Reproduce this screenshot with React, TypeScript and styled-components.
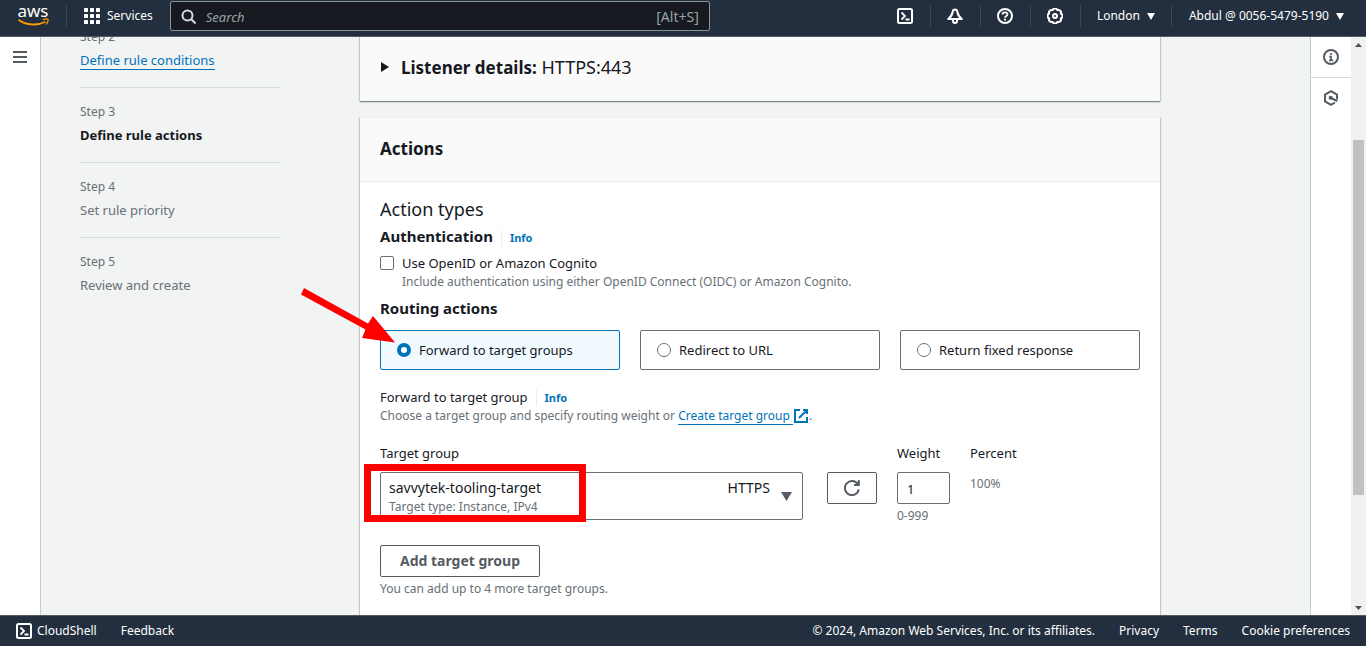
import React, { useState } from "react";
import styled, { createGlobalStyle } from "styled-components";

const GlobalStyle = createGlobalStyle`
  *, *::before, *::after { box-sizing: border-box; }
  body {
    margin: 0;
    font-family: "Noto Sans", sans-serif;
    font-size: 13px;
    line-height: 20px;
    color: #16191f;
    background: #f2f3f3;
  }
  button, input, select { font: inherit; color: inherit; margin: 0; }
  h1, h2, h3, p, ol { margin: 0; padding: 0; }
`;

const Shell = styled.div`
  display: flex;
  flex-direction: column;
  height: 100vh;
  overflow: hidden;
`;

/* ---------- top navigation ---------- */

const TopBar = styled.header`
  display: flex;
  align-items: center;
  flex: none;
  height: 37px;
  padding: 0 0 4px;
  background: #232f3e;
  border-bottom: 1px solid #545b64;
  color: #fff;
  font-size: 12px;
`;

const LogoLink = styled.a`
  display: flex;
  padding: 0 17px;
  color: #fff;
  & > svg { overflow: visible; }
`;

const Rule = styled.span`
  width: 1px;
  height: 22px;
  background: #414750;
`;

const NavButton = styled.button<{ $pad?: number }>`
  display: flex;
  align-items: center;
  gap: 7px;
  padding: 0 ${(p) => p.$pad ?? 16}px;
  border: 0;
  background: none;
  font-size: 12px;
  line-height: 20px;
  white-space: nowrap;
`;

const IconButton = styled.button`
  display: flex;
  align-items: center;
  justify-content: center;
  width: 49px;
  padding: 0;
  border: 0;
  background: none;
`;

const SearchBox = styled.label`
  display: flex;
  align-items: center;
  flex: 0 1 540px;
  height: 30px;
  padding: 1px 10px 0;
  gap: 9px;
  background: #161920;
  border: 1px solid #879596;
  border-radius: 2px;
  color: #95a5a6;
  font-size: 14px;
`;

const SearchInput = styled.input`
  flex: 1;
  min-width: 0;
  padding: 0;
  border: 0;
  outline: 0;
  background: none;
  font-size: 13px;
  &::placeholder { color: #95a5a6; font-style: italic; opacity: 1; }
`;

const NavEnd = styled.div`
  display: flex;
  align-items: center;
  margin-left: auto;
  padding-right: 5px;
`;

/* ---------- page frame ---------- */

const Body = styled.div`
  display: flex;
  flex: 1;
  min-height: 0;
`;

const SideRail = styled.nav`
  flex: none;
  width: 41px;
  padding: 10px 0 0 10px;
  background: #fff;
  border-right: 1px solid #c5cccc;
`;

const RailButton = styled.button`
  display: flex;
  align-items: center;
  justify-content: center;
  width: 20px;
  height: 20px;
  padding: 0;
  border: 0;
  background: none;
  color: #545b64;
`;

const ToolRail = styled.aside`
  flex: none;
  width: 41px;
  background: #fff;
  border-left: 1px solid #c5cccc;
`;

const ToolButton = styled.button`
  display: flex;
  align-items: center;
  justify-content: center;
  width: 40px;
  height: 40px;
  padding: 0;
  border: 0;
  background: none;
  color: #545b64;
  &:first-child { height: 41px; border-bottom: 1px solid #d5dbdb; }
`;

const ScrollTrack = styled.div`
  display: flex;
  flex-direction: column;
  align-items: center;
  flex: none;
  width: 15px;
  padding: 6px 0 5px;
  background: #f1f1f1;
  color: #505050;
`;

const ScrollGutter = styled.div`
  display: flex;
  flex-direction: column;
  flex: 1;
  width: 11px;
  padding: 93px 0 111px;
`;

const ScrollThumb = styled.div`
  flex: 1;
  background: #c1c1c1;
`;

const Content = styled.main`
  display: flex;
  flex: 1;
  gap: 80px;
  min-width: 0;
  padding: 0 40px 0 39px;
  overflow: hidden;
`;

/* ---------- wizard steps ---------- */

const Steps = styled.ol`
  flex: none;
  width: 200px;
  margin-top: -24px;
  list-style: none;
`;

const Step = styled.li`
  padding: 13px 0 15px;
  border-bottom: 1px solid #d5dbdb;
  color: #687078;
  &:last-child { border-bottom: 0; }
`;

const StepLabel = styled.div`
  font-size: 12px;
  line-height: 22px;
`;

const StepTitle = styled.div<{ $current?: boolean }>`
  line-height: 24px;
  ${(p) => p.$current && "color: #16191f; font-weight: 700;"}
`;

const Link = styled.a`
  color: #0073bb;
  text-decoration: none;
  border-bottom: 1px solid #0073bb;
`;

/* ---------- panels ---------- */

const Main = styled.div`
  display: flex;
  flex-direction: column;
  flex: 1;
  gap: 16px;
  min-width: 0;
  max-width: 800px;
`;

const Panel = styled.section`
  background: #fff;
  border-top: 1px solid #eaeded;
  box-shadow: 0 1px 1px 0 rgba(0, 28, 36, 0.3), 1px 1px 1px 0 rgba(0, 28, 36, 0.15),
    -1px 1px 1px 0 rgba(0, 28, 36, 0.15);
`;

const ListenerPanel = styled(Panel)`
  margin-top: -1px;
  background: #fafafa;
`;

const Expander = styled.button`
  display: flex;
  align-items: center;
  gap: 11px;
  width: 100%;
  height: 64px;
  padding: 0 20px 4px;
  border: 0;
  background: none;
  font-size: 18px;
  line-height: 22px;
  & b { font-size: 17px; }
`;

const PanelHeader = styled.div`
  padding: 19px 20px 21px;
  background: #fafafa;
  border-bottom: 1px solid #eaeded;
`;

const PanelTitle = styled.h2`
  font-size: 17px;
  line-height: 23px;
`;

const PanelBody = styled.div`
  padding: 15px 20px 80px;
`;

const SectionTitle = styled.h3<{ $light?: boolean }>`
  font-size: ${(p) => (p.$light ? 18 : 15)}px;
  font-weight: ${(p) => (p.$light ? 400 : 700)};
  line-height: 24px;
`;

const Row = styled.div<{ $top?: number }>`
  display: flex;
  align-items: baseline;
  gap: 8px;
  padding-top: ${(p) => p.$top ?? 0}px;
`;

const InfoLink = styled.a`
  padding-left: 8px;
  border-left: 1px solid #eaeded;
  color: #0073bb;
  font-size: 11px;
  font-weight: 700;
  line-height: 16px;
  text-decoration: none;
`;

const Hint = styled.p`
  color: #687078;
  font-size: 12px;
  line-height: 18px;
`;

const FieldHint = styled(Hint)`
  padding-top: 3px;
`;

const CheckField = styled.div`
  display: grid;
  grid-template-columns: 14px 1fr;
  column-gap: 8px;
  align-items: center;
  padding: 5px 0;
  & > p { grid-column: 2; }
`;

const CheckBox = styled.input`
  appearance: none;
  width: 14px;
  height: 14px;
  border: 1px solid #687078;
  border-radius: 2px;
  background: #fff;
  &:checked { background: #0073bb; }
`;

const Tiles = styled.div`
  display: grid;
  grid-template-columns: repeat(3, 1fr);
  gap: 20px;
  padding: 10px 0 17px;
`;

const Tile = styled.label<{ $selected: boolean }>`
  position: relative;
  display: flex;
  align-items: center;
  gap: 8px;
  height: 40px;
  padding: 0 16px;
  border: 1px solid ${(p) => (p.$selected ? "#0073bb" : "#687078")};
  border-radius: 2px;
  background: ${(p) => (p.$selected ? "#f1faff" : "#fff")};
`;

const Radio = styled.input`
  appearance: none;
  width: 14px;
  height: 14px;
  border: 1px solid #687078;
  border-radius: 50%;
  background: #fff;
  &:checked { border: 4px solid #0073bb; }
`;

const Arrow = styled.svg`
  position: absolute;
  top: -44px;
  left: -81px;
  z-index: 1;
  pointer-events: none;
`;

const Fields = styled.div`
  display: grid;
  grid-template-columns: minmax(200px, 423px) 54px 53px 1fr;
  column-gap: 20px;
  padding-top: 18px;
`;

const FieldLabel = styled.label`
  display: block;
  padding-bottom: 9px;
`;

const RefreshCell = styled.div`
  padding: 29px 0 0 4px;
`;

const Highlight = styled.div`
  position: absolute;
  top: -8px;
  left: -16px;
  width: 222px;
  height: 58px;
  border: 7px solid #ff0000;
  pointer-events: none;
`;

const SelectBox = styled.div`
  position: relative;
  display: grid;
  font-size: 14px;
`;

const Select = styled.select`
  grid-area: 1 / 1;
  appearance: none;
  width: 100%;
  height: 48px;
  padding: 0 60px 16px 8px;
  border: 1px solid #687078;
  border-radius: 2px;
  background: #fff;
  outline: 0;
`;

const SelectDetail = styled.div`
  grid-area: 1 / 1;
  display: flex;
  justify-content: space-between;
  padding: 6px 11px 0 9px;
  pointer-events: none;
  & > p { padding-top: 20px; }
`;

const Protocol = styled.span`
  display: flex;
  gap: 11px;
  & > svg { margin-top: 14px; color: #545b64; }
`;

const OutlineButton = styled.button<{ $pad?: number }>`
  display: flex;
  align-items: center;
  justify-content: center;
  height: 32px;
  padding: 0 ${(p) => p.$pad ?? 19}px;
  border: 1px solid #545b64;
  border-radius: 2px;
  background: #fff;
  color: #545b64;
  font-size: 14px;
  font-weight: 700;
`;

const WeightInput = styled.input`
  display: block;
  width: 100%;
  height: 32px;
  padding: 2px 9px 0;
  border: 1px solid #687078;
  border-radius: 2px;
  background: #fff;
`;

const AddGroup = styled.div`
  padding-top: 20px;
  & > p { padding-top: 3px; }
`;

/* ---------- footer ---------- */

const Footer = styled.footer`
  display: flex;
  align-items: center;
  flex: none;
  height: 31px;
  padding: 0 16px;
  gap: 24px;
  background: #232f3e;
  border-top: 1px solid #545b64;
  color: #fff;
  font-size: 12px;
`;

const FooterLink = styled.a`
  display: flex;
  align-items: center;
  gap: 5px;
  color: #fff;
  text-decoration: none;
  white-space: nowrap;
`;

const Copyright = styled.span`
  margin-left: auto;
  white-space: nowrap;
`;

/* ---------- icons ---------- */

const Icon = ({ children, size = 16 }: { children: React.ReactNode; size?: number }) => (
  <svg width={size} height={size} viewBox="0 0 16 16" fill="none" stroke="currentColor" strokeWidth="2" aria-hidden="true">
    {children}
  </svg>
);

const TerminalIcon = () => (
  <Icon>
    <rect x="1" y="1" width="14" height="14" rx="1.5" />
    <path d="M4.500 4.500 8 8l-3.500 3.500M8.500 11.500h4" strokeWidth="1.800" />
  </Icon>
);

const BellIcon = () => (
  <Icon>
    <path d="M8 1.500C6.800 1.500 5.800 2.500 5.600 4 5 7.500 4 9 1.200 11h13.600C12 9 11 7.500 10.400 4 10.200 2.500 9.200 1.500 8 1.500Z" strokeLinejoin="round" />
    <path d="M6 11.500V13a2 2 0 0 0 4 0v-1.500" />
  </Icon>
);

const HelpIcon = () => (
  <Icon>
    <circle cx="8" cy="8" r="7" />
    <path d="M5.500 6.600c0-1.400 1.100-2.200 2.500-2.200s2.500.8 2.500 2.100c0 1.600-2.500 1.500-2.500 3.200" strokeWidth="1.800" />
    <path d="M8 10.700v1.800" />
  </Icon>
);

const gearPath = Array.from({ length: 8 }, (_, i) => {
  const at = (a: number, r: number) =>
    `${(8 + r * Math.cos(a)).toFixed(2)} ${(8 + r * Math.sin(a)).toFixed(2)}`;
  const start = (i * Math.PI) / 4 + Math.PI / 8;
  return `${i === 0 ? `M${at(start, 6.4)}` : ""}A2.700 2.700 0 0 1 ${at(start + Math.PI / 4, 6.4)}`;
}).join("");

const GearIcon = () => (
  <Icon>
    <path d={`${gearPath}Z`} />
    <circle cx="8" cy="8" r="2" />
  </Icon>
);

const InfoIcon = () => (
  <Icon>
    <circle cx="8" cy="8" r="7" />
    <path d="M8 4v2M6.200 7.700H8V11M6 11.300h4.200" strokeWidth="1.700" />
  </Icon>
);

const HexIcon = () => (
  <Icon>
    <path d="M14 9.500V4.600L8 1.200 2 4.600v6.800l6 3.400 4-2.300" strokeLinejoin="round" />
    <circle cx="7.600" cy="7.800" r="2" fill="currentColor" stroke="none" />
    <path d="m8 8 6.200 3.200" />
  </Icon>
);

const MenuIcon = () => (
  <Icon>
    <path d="M1 3h14M1 8h14M1 13h14" />
  </Icon>
);

const GridIcon = () => (
  <svg width="16" height="16" viewBox="0 0 16 16" fill="currentColor" aria-hidden="true">
    {[0, 6, 12].map((y) => [0, 6, 12].map((x) => <rect key={`${x}-${y}`} x={x} y={y} width="4" height="4" rx="0.500" />))}
  </svg>
);

const SearchIcon = () => (
  <svg width="16" height="16" viewBox="0 0 16 16" fill="none" stroke="#d5dbdb" strokeWidth="2" aria-hidden="true">
    <circle cx="6.500" cy="6.500" r="5" />
    <path d="m10 10 4.500 4.500" />
  </svg>
);

const ExternalIcon = styled.svg`
  vertical-align: -4px;
`;

const RefreshIcon = () => (
  <Icon>
    <path d="M14.800 9.500A7 7 0 1 1 13.800 4.200M10 5h4.800V0" />
  </Icon>
);

const Caret = ({ w = 8, h = 7 }: { w?: number; h?: number }) => (
  <svg width={w} height={h} viewBox="0 0 10 8" preserveAspectRatio="none" fill="currentColor" aria-hidden="true">
    <path d="M0 0h10L5 8z" />
  </svg>
);

const Logo = () => (
  <svg width="32" height="24" viewBox="0 0 32 24" role="img" aria-label="aws">
    <text x="16" y="13" textAnchor="middle" fontFamily="Noto Sans, sans-serif" fontSize="17" fontWeight="400" fill="#fff">
      aws
    </text>
    <path d="M1.500 15.700C9 21.500 21 21.800 28.500 17.800" fill="none" stroke="#f90" strokeWidth="1.800" />
    <path d="M26 15.700c2-1 4.500-1 5-.4.400.8-.3 3.600-1.900 5.100" fill="none" stroke="#f90" strokeWidth="1.300" />
  </svg>
);

const routes = ["Forward to target groups", "Redirect to URL", "Return fixed response"];

export default function App() {
  const [route, setRoute] = useState(routes[0]);
  const [weight, setWeight] = useState("1");

  return (
    <Shell>
      <GlobalStyle />
      <TopBar>
        <LogoLink href="#home"><Logo /></LogoLink>
        <Rule />
        <NavButton $pad={17}><GridIcon />Services</NavButton>
        <SearchBox>
          <SearchIcon />
          <SearchInput type="search" placeholder="Search" aria-label="Search" />
          [Alt+S]
        </SearchBox>
        <NavEnd>
          <IconButton aria-label="CloudShell"><TerminalIcon /></IconButton>
          <Rule />
          <IconButton aria-label="Notifications"><BellIcon /></IconButton>
          <Rule />
          <IconButton aria-label="Help"><HelpIcon /></IconButton>
          <Rule />
          <IconButton aria-label="Settings"><GearIcon /></IconButton>
          <Rule />
          <NavButton>London <Caret /></NavButton>
          <Rule />
          <NavButton $pad={17}>Abdul @ 0056-5479-5190 <Caret /></NavButton>
        </NavEnd>
      </TopBar>

      <Body>
        <SideRail aria-label="Side navigation">
          <RailButton aria-label="Open navigation"><MenuIcon /></RailButton>
        </SideRail>

        <Content>
          <Steps>
            <Step>
              <StepLabel>Step 2</StepLabel>
              <StepTitle><Link href="#conditions">Define rule conditions</Link></StepTitle>
            </Step>
            <Step>
              <StepLabel>Step 3</StepLabel>
              <StepTitle $current>Define rule actions</StepTitle>
            </Step>
            <Step>
              <StepLabel>Step 4</StepLabel>
              <StepTitle>Set rule priority</StepTitle>
            </Step>
            <Step>
              <StepLabel>Step 5</StepLabel>
              <StepTitle>Review and create</StepTitle>
            </Step>
          </Steps>

          <Main>
            <ListenerPanel>
              <Expander aria-expanded="false">
                <svg width="10" height="10" viewBox="0 0 10 10" fill="currentColor" aria-hidden="true">
                  <path d="M1 0v10l8-5z" />
                </svg>
                <span><b>Listener details:</b> HTTPS:443</span>
              </Expander>
            </ListenerPanel>

            <Panel>
              <PanelHeader><PanelTitle>Actions</PanelTitle></PanelHeader>
              <PanelBody>
                <SectionTitle $light>Action types</SectionTitle>
                <Row $top={3}>
                  <SectionTitle>Authentication</SectionTitle>
                  <InfoLink href="#auth-info">Info</InfoLink>
                </Row>
                <CheckField>
                  <CheckBox type="checkbox" id="oidc" />
                  <label htmlFor="oidc">Use OpenID or Amazon Cognito</label>
                  <Hint>Include authentication using either OpenID Connect (OIDC) or Amazon Cognito.</Hint>
                </CheckField>
                <SectionTitle>Routing actions</SectionTitle>
                <Tiles role="radiogroup" aria-label="Routing actions">
                  {routes.map((name, i) => (
                    <Tile key={name} $selected={route === name}>
                      <Radio type="radio" name="route" checked={route === name} onChange={() => setRoute(name)} />
                      {name}
                      {i === 0 && (
                        <Arrow width="98" height="60" viewBox="0 0 98 60" aria-hidden="true">
                          <path d="M4 1 68 36.500 73 29 95 55.500 62 51 65.500 42.500 1 7.500z" fill="#ff0000" />
                        </Arrow>
                      )}
                    </Tile>
                  ))}
                </Tiles>

                <Row>
                  <span>Forward to target group</span>
                  <InfoLink href="#forward-info">Info</InfoLink>
                </Row>
                <Hint>
                  Choose a target group and specify routing weight or{" "}
                  <Link href="#create">Create target group&nbsp;</Link>
                  <ExternalIcon width="16" height="16" viewBox="0 0 16 16" fill="none" stroke="#0073bb" strokeWidth="2" aria-hidden="true">
                    <path d="M10 2h4v4M6 10l8-8M14 9v5H2V2h5" />
                  </ExternalIcon>
                  .
                </Hint>

                <Fields>
                  <div>
                    <FieldLabel htmlFor="target">Target group</FieldLabel>
                    <SelectBox>
                      <Select id="target">
                        <option>savvytek-tooling-target</option>
                      </Select>
                      <SelectDetail>
                        <Hint>Target type: Instance, IPv4</Hint>
                        <Protocol>HTTPS <Caret w={11} h={9} /></Protocol>
                      </SelectDetail>
                      <Highlight />
                    </SelectBox>
                  </div>
                  <RefreshCell>
                    <OutlineButton $pad={16} aria-label="Refresh"><RefreshIcon /></OutlineButton>
                  </RefreshCell>
                  <div>
                    <FieldLabel htmlFor="weight">Weight</FieldLabel>
                    <WeightInput id="weight" inputMode="numeric" value={weight} onChange={(e) => setWeight(e.target.value)} />
                    <FieldHint>0-999</FieldHint>
                  </div>
                  <div>
                    <FieldLabel as="span">Percent</FieldLabel>
                    <FieldHint>100%</FieldHint>
                  </div>
                </Fields>

                <AddGroup>
                  <OutlineButton>Add target group</OutlineButton>
                  <Hint>You can add up to 4 more target groups.</Hint>
                </AddGroup>
              </PanelBody>
            </Panel>
          </Main>
        </Content>

        <ToolRail>
          <ToolButton aria-label="Info"><InfoIcon /></ToolButton>
          <ToolButton aria-label="Tutorials"><HexIcon /></ToolButton>
        </ToolRail>
        <ScrollTrack aria-hidden="true">
          <svg width="7" height="4" viewBox="0 0 7 4" fill="currentColor"><path d="M3.500 0 7 4H0z" /></svg>
          <ScrollGutter><ScrollThumb /></ScrollGutter>
          <svg width="7" height="4" viewBox="0 0 7 4" fill="currentColor"><path d="M0 0h7L3.500 4z" /></svg>
        </ScrollTrack>
      </Body>

      <Footer>
        <FooterLink href="#shell"><TerminalIcon />CloudShell</FooterLink>
        <FooterLink href="#feedback">Feedback</FooterLink>
        <Copyright>© 2024, Amazon Web Services, Inc. or its affiliates.</Copyright>
        <FooterLink href="#privacy">Privacy</FooterLink>
        <FooterLink href="#terms">Terms</FooterLink>
        <FooterLink href="#cookies">Cookie preferences</FooterLink>
      </Footer>
    </Shell>
  );
}
